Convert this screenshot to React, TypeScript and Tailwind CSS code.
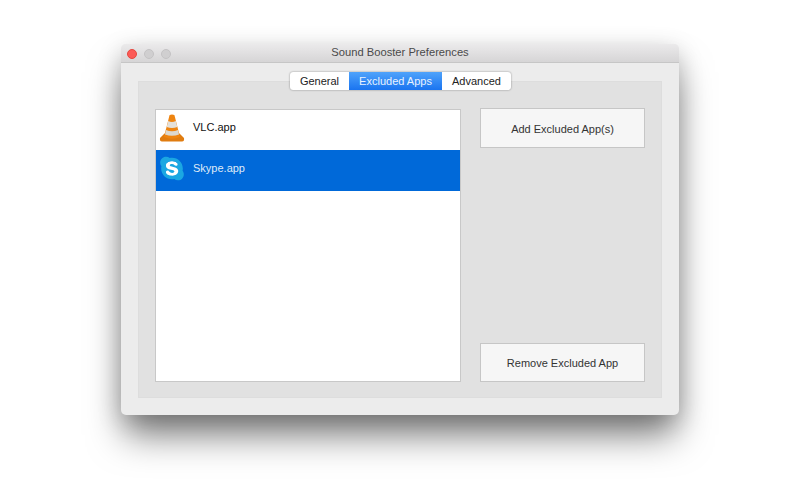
import React from "react";
import { FaSkype } from "react-icons/fa";

const VlcIcon = () => (
  <svg width="26" height="28" viewBox="0 0 26 28">
    <path d="M1 24 L5.5 19.5 H20.5 L25 24 Q25.5 27.5 23 27.5 H3 Q0.5 27.5 1 24 Z" fill="#e07c10" />
    <path d="M10.6 1 Q13 0 15.4 1 L21 23 Q13 26.5 5 23 Z" fill="#ee8410" />
    <path d="M9.2 7 Q13 8.8 16.8 7 L18.3 13 Q13 15.2 7.7 13 Z" fill="#e4e0d9" />
    <path d="M7 16 Q13 18.5 19 16 L20 20.5 Q13 23 6 20.5 Z" fill="#dcd8cf" />
  </svg>
);

const SkypeIcon = () => (
  <div className="relative flex h-[26px] w-[26px] items-center justify-center">
    <span className="absolute h-[16px] w-[16px] rounded-full bg-white" />
    <FaSkype className="relative text-[27px] text-[#1ba7e2]" />
  </div>
);

const tabs = ["General", "Excluded Apps", "Advanced"];

export default function App() {
  return (
    <div className="h-[500px] w-[800px] overflow-hidden bg-white pl-[121px] pt-[44px] font-['Liberation_Sans',Arial,sans-serif]">
      <div className="flex h-[371px] w-[558px] flex-col overflow-hidden rounded-[5px] bg-[#ececec] shadow-[0_24px_36px_-4px_rgba(0,0,0,0.5),0_6px_24px_rgba(0,0,0,0.18)]">
        {/* title bar */}
        <div className="relative flex h-[19px] shrink-0 items-center justify-center border-b border-[#c6c6c6] bg-[linear-gradient(#ebeaeb,#d6d5d6)]">
          <div className="absolute left-[6px] top-[5px] flex gap-[7px]">
            <span className="h-[10px] w-[10px] rounded-full border border-[#e5483f] bg-[#fc5b57]" />
            <span className="h-[10px] w-[10px] rounded-full border border-[#c4c3c4] bg-[#d0cfd0]" />
            <span className="h-[10px] w-[10px] rounded-full border border-[#c4c3c4] bg-[#d0cfd0]" />
          </div>
          <span className="text-[11.2px] leading-none text-[#4a4a4a]">Sound Booster Preferences</span>
        </div>

        <div className="flex flex-1 flex-col px-[17px] pb-[17px] pt-[18px]">
          <div className="flex h-[317px] flex-col bg-[#e1e1e1] shadow-[inset_0_0_0_1px_#dddddd]">
            {/* segmented tabs */}
            <div className="-mt-[9px] flex justify-center">
              <div className="ml-[1px] flex h-[18px] overflow-hidden rounded-[3px] bg-white text-[11px] leading-none text-[#222] shadow-[0_0_2px_rgba(0,0,0,0.45)]">
                {tabs.map((t) => (
                  <div
                    key={t}
                    className={
                      t === "Excluded Apps"
                        ? "flex w-[93px] items-center justify-center bg-[linear-gradient(#4fa3fb,#1a74f0)] text-[#e8f2ff]"
                        : t === "General"
                          ? "flex w-[59px] items-center justify-center"
                          : "flex w-[69px] items-center justify-center"
                    }
                  >
                    {t}
                  </div>
                ))}
              </div>
            </div>

            <div className="flex flex-1 pl-[17px] pt-[19px]">
              {/* app list */}
              <div className="h-[273px] w-[306px] border border-[#c8c8c8] bg-white">
                <div className="flex h-[40px] items-center pl-[3px] text-[11px] text-[#111]">
                  <div className="-mt-[5px] flex w-[26px] justify-center">
                    <VlcIcon />
                  </div>
                  <span className="-mt-[5px] ml-[8px]">VLC.app</span>
                </div>
                <div className="flex h-[41px] items-center bg-[#0069d9] pl-[3px] text-[11px] text-[#dfeaf7]">
                  <div className="-mt-[4px] flex w-[26px] justify-center">
                    <SkypeIcon />
                  </div>
                  <span className="-mt-[5px] ml-[8px]">Skype.app</span>
                </div>
              </div>

              {/* buttons */}
              <div className="ml-[19px] flex h-[273px] w-[165px] flex-col justify-between">
                <button className="-mt-[1px] h-[40px] border border-[#c6c6c6] bg-[#f6f6f6] pt-[2px] text-[11px] text-[#333]">
                  Add Excluded App(s)
                </button>
                <button className="h-[39px] border border-[#c6c6c6] bg-[#f6f6f6] pt-[2px] text-[11px] text-[#333]">
                  Remove Excluded App
                </button>
              </div>
            </div>
          </div>
        </div>
      </div>
    </div>
  );
}
